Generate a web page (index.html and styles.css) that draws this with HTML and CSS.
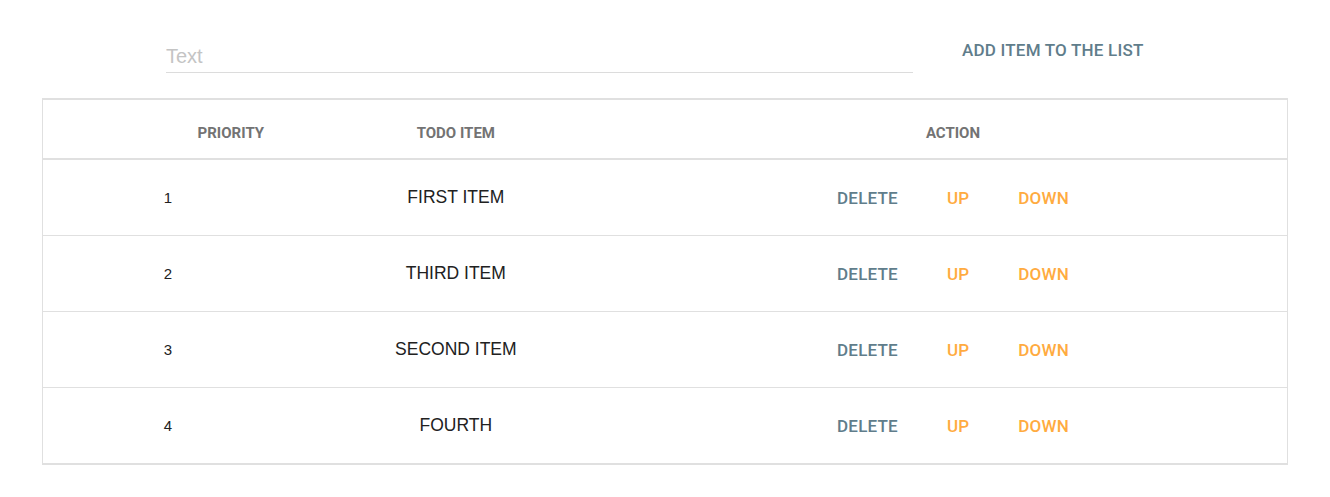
FILE: index.html
```html
<!DOCTYPE html>
<html>
<head>
<meta charset="utf-8">
<link rel="stylesheet" href="styles.css">
</head>
<body>
<div class="top">
  <input class="text-input" type="text" placeholder="Text">
  <button class="btn-flat add">ADD ITEM TO THE LIST</button>
</div>
<table class="todo">
  <colgroup>
    <col class="c1"><col class="c2"><col class="c3">
  </colgroup>
  <thead>
    <tr><th class="h-pri">PRIORITY</th><th>TODO ITEM</th><th>ACTION</th></tr>
  </thead>
  <tbody>
    <tr><td class="num">1</td><td class="item">FIRST ITEM</td><td class="acts"><button class="btn-flat del">DELETE</button><button class="btn-flat mv">UP</button><button class="btn-flat mv">DOWN</button></td></tr>
    <tr><td class="num">2</td><td class="item">THIRD ITEM</td><td class="acts"><button class="btn-flat del">DELETE</button><button class="btn-flat mv">UP</button><button class="btn-flat mv">DOWN</button></td></tr>
    <tr><td class="num">3</td><td class="item">SECOND ITEM</td><td class="acts"><button class="btn-flat del">DELETE</button><button class="btn-flat mv">UP</button><button class="btn-flat mv">DOWN</button></td></tr>
    <tr><td class="num">4</td><td class="item">FOURTH</td><td class="acts"><button class="btn-flat del">DELETE</button><button class="btn-flat mv">UP</button><button class="btn-flat mv">DOWN</button></td></tr>
  </tbody>
</table>
</body>
</html>
```
FILE: styles.css
```css
html, body { margin: 0; padding: 0; background: #fff; }
body { font-family: "Liberation Sans", Arial, sans-serif; color: #212121; }

.top {
  display: flex;
  align-items: flex-start;
  padding: 36px 0 0 166px;
  height: 62px;
  box-sizing: border-box;
}
.text-input {
  width: 747px;
  height: 37px;
  border: none;
  border-bottom: 1px solid #dcdcdc;
  outline: none;
  padding: 4px 0 0 0;
  font-family: "Liberation Sans", Arial, sans-serif;
  font-size: 20px;
  color: #212121;
  box-sizing: border-box;
}
.text-input::placeholder { color: #c4c4c4; }

.btn-flat {
  background: none;
  border: none;
  font-family: Roboto, "Noto Sans", sans-serif;
  font-weight: 500;
  font-size: 17px;
  letter-spacing: 0.2px;
  padding: 0 16px;
  height: 36px;
  line-height: 36px;
  cursor: pointer;
  text-transform: uppercase;
}
.add { color: #607d8b; margin-left: 33px; margin-top: -4px; }

.todo {
  margin: 36px 0 0 42px;
  width: 1246px;
  table-layout: fixed;
  border-collapse: collapse;
  border-top: 2px solid #e0e0e0;
  border-left: 1px solid #e0e0e0;
  border-right: 1px solid #e0e0e0;
  border-bottom: 2px solid #e0e0e0;
}
.c1 { width: 250px; }
.c2 { width: 326px; }
.c3 { width: 668px; }

.todo th {
  height: 60px;
  padding: 8px 0 0 0;
  box-sizing: border-box;
  font-family: Roboto, "Noto Sans", sans-serif;
  font-weight: 700;
  font-size: 15px;
  color: #737373;
  text-align: center;
  border-bottom: 2px solid #e0e0e0;
}
.todo th.h-pri { padding-left: 126px; }

.todo td {
  height: 76px;
  padding: 0;
  box-sizing: border-box;
  text-align: center;
  border-bottom: 1px solid #e0e0e0;
}
.todo tbody tr:last-child td { border-bottom: none; height: 77px; }
.num { font-size: 15px; color: #212121; }
.item { font-size: 17.5px; color: #212121; }
.acts { font-size: 0; padding-top: 2px; }
.todo td.acts { padding-top: 2px; }
.acts .btn-flat + .btn-flat { margin-left: 17px; }
.del { color: #607d8b; }
.mv { color: #ffab40; }
```
